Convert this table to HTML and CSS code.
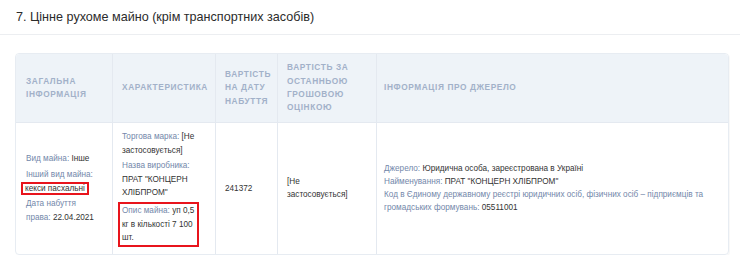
FILE: index.html
```html
<!DOCTYPE html>
<html lang="uk">
<head>
<meta charset="utf-8">
<link rel="stylesheet" href="styles.css">
</head>
<body>
<h2 class="title">7. Цінне рухоме майно (крім транспортних засобів)</h2>
<div class="sep"></div>
<div class="wrap">
<table class="tbl">
  <colgroup>
    <col class="c1"><col class="c2"><col class="c3"><col class="c4"><col class="c5">
  </colgroup>
  <thead>
    <tr>
      <th>Загальна інформація</th>
      <th>Характеристика</th>
      <th>Вартість на дату набуття</th>
      <th>Вартість за останньою грошовою оцінкою</th>
      <th>Інформація про джерело</th>
    </tr>
  </thead>
  <tbody>
    <tr>
      <td>
        <div class="item"><span class="lbl">Вид майна:</span> Інше</div>
        <div class="item"><span class="lbl">Інший вид майна:</span> <span class="hl">кекси пасхальні</span></div>
        <div class="item"><span class="lbl">Дата набуття права:</span> 22.04.2021</div>
      </td>
      <td>
        <div class="item"><span class="lbl">Торгова марка:</span> [Не застосовується]</div>
        <div class="item"><span class="lbl">Назва виробника:</span> ПРАТ "КОНЦЕРН ХЛІБПРОМ"</div>
        <div class="item box"><span class="lbl">Опис майна:</span> уп 0,5 кг в кількості 7 100 шт.</div>
      </td>
      <td>241372</td>
      <td>[Не застосовується]</td>
      <td class="src">
        <div><span class="lbl">Джерело:</span> Юридична особа, зареєстрована в Україні</div>
        <div><span class="lbl">Найменування:</span> ПРАТ "КОНЦЕРН ХЛІБПРОМ"</div>
        <div><span class="lbl">Код в Єдиному державному реєстрі юридичних осіб, фізичних осіб – підприємців та громадських формувань:</span> 05511001</div>
      </td>
    </tr>
  </tbody>
</table>
</div>
</body>
</html>
```

FILE: styles.css
```css
html, body {
  margin: 0;
  padding: 0;
  background: #fff;
}
body {
  font-family: "Liberation Sans", Arial, sans-serif;
  color: #333;
}
.title {
  margin: 0;
  padding: 9px 16px 0;
  font-size: 12.6px;
  font-weight: normal;
  line-height: 16px;
  color: #2b2b2b;
  height: 25px;
}
.sep {
  height: 1px;
  background: #eceef1;
}
.wrap {
  padding: 18px 11px 0 15px;
}
.tbl {
  width: 714px;
  border-collapse: separate;
  border-spacing: 0;
  table-layout: fixed;
  border: 1px solid #e7ecf2;
  border-radius: 4px;
  box-shadow: 1px 1px 1px rgba(0,0,0,0.03);
}
.c1 { width: 97px; }
.c2 { width: 103px; }
.c3 { width: 62px; }
.c4 { width: 99px; }
.c5 { width: auto; }
.tbl th {
  background: #eef3f8;
  height: 68px;
  padding: 0 3px 0 9px;
  text-align: left;
  vertical-align: middle;
  font-size: 8.3px;
  font-weight: bold;
  text-transform: uppercase;
  letter-spacing: 0.6px;
  line-height: 13.4px;
  color: #a2b1c9;
  border-right: 1px solid #e4e9f0;
  border-bottom: 1px solid #e4e9f0;
}
.tbl th:first-child, .tbl td:first-child { padding-left: 10px; }
.tbl th:last-child, .tbl td:last-child { border-right: none; }
.tbl th:first-child { border-top-left-radius: 4px; }
.tbl th:last-child { border-top-right-radius: 4px; }
.tbl th:last-child { padding-left: 7px; }
.tbl td {
  padding: 7px 14px 7px 9px;
  vertical-align: middle;
  font-size: 8.2px;
  line-height: 13.6px;
  color: #333;
  border-right: 1px solid #e4e9f0;
  height: 115px;
}
.item { margin-bottom: 2px; }
.item:last-child { margin-bottom: 0; }
.lbl { color: #7387aa; }
.hl {
  border: 2px solid #e8141c;
  padding: 0 2px;
  margin-left: -5px;
}
.box {
  border: 2px solid #e8141c;
  margin: 0 2px 0 -4px;
  padding: 0 2px;
}
.tbl td.src {
  padding-left: 7px;
  line-height: 13px;
}
```
